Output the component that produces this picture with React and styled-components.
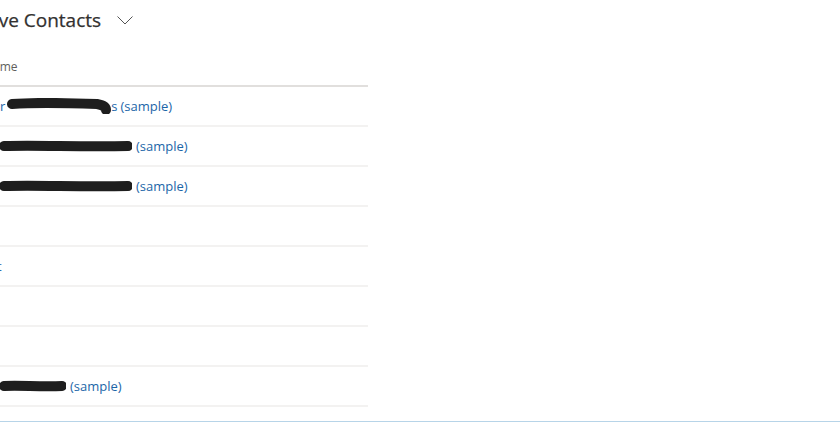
import React from 'react';
import styled, { createGlobalStyle } from 'styled-components';

const Global = createGlobalStyle`
  html, body { margin: 0; padding: 0; background: #fff; }
  body { font-family: "Open Sans", "Noto Sans", sans-serif; overflow: hidden; }
`;

const Page = styled.div`
  width: 840px;
  height: 422px;
  box-sizing: border-box;
  border-bottom: 1px solid #b7d4e8;
  overflow: hidden;
  display: flex;
  flex-direction: column;
`;

const TitleRow = styled.div`
  height: 40px;
  display: flex;
  align-items: center;
  margin-left: -34px;
  gap: 16px;
`;

const Title = styled.h1`
  margin: 0;
  font-size: 19px;
  font-weight: 400;
  color: #323130;
  line-height: 26px;
  white-space: nowrap;
  -webkit-text-stroke: 0.25px #323130;
`;

const Grid = styled.div`
  margin-left: -16px;
  width: 384px;
  display: flex;
  flex-direction: column;
`;

const HeaderRow = styled.div`
  height: 47px;
  box-sizing: border-box;
  border-bottom: 2px solid #e1dfdd;
  display: flex;
  align-items: flex-end;
  padding-bottom: 10px;
`;

const HeaderCell = styled.span`
  font-size: 12px;
  line-height: 16px;
  color: #605e5c;
`;

const Row = styled.div`
  height: 40px;
  box-sizing: border-box;
  border-bottom: 2px solid #f3f2f1;
  display: flex;
  align-items: center;
`;

const NameLink = styled.a`
  display: flex;
  align-items: center;
  margin-left: ${(p) => p.$indent || 0}px;
  font-size: 13px;
  line-height: 18px;
  color: #1c66a8;
  text-decoration: none;
  white-space: pre;
`;

const Sample = styled.span`
  margin-left: ${(p) => p.$gap ?? 4}px;
`;

function Scribble({ width, curl }) {
  const h = 16;
  const d = curl
    ? `M5 6 C ${width * 0.3} 4, ${width * 0.6} 5, ${width - 14} 6 C ${width - 8} 7, ${width - 5} 9, ${width - 5} 12`
    : `M4 8 C ${width * 0.3} 7, ${width * 0.6} 9, ${width - 4} 8`;
  return (
    <svg width={width} height={h} viewBox={`0 0 ${width} ${h}`} style={{ display: 'block' }}>
      <path d={d} stroke="#1e1e1e" strokeWidth="10" strokeLinecap="round" fill="none" />
    </svg>
  );
}

function Chevron() {
  return (
    <svg width="16" height="11" viewBox="0 0 16 11">
      <polyline points="0.5,1.5 8,9 15.5,1.5" fill="none" stroke="#555" strokeWidth="1" />
    </svg>
  );
}

const rows = [
  { indent: 16, pre: 'r', scribble: 104, curl: true, post: 's', gap: 3 },
  { indent: 16, scribble: 132 },
  { indent: 16, scribble: 132 },
  null,
  { indent: 13, pre: 't' },
  null,
  null,
  { indent: 16, scribble: 66 },
];

export default function App() {
  return (
    <>
      <Global />
      <Page>
        <TitleRow>
          <Title>Active Contacts</Title>
          <Chevron />
        </TitleRow>
        <Grid>
          <HeaderRow>
            <HeaderCell>Name</HeaderCell>
          </HeaderRow>
          {rows.map((r, i) => (
            <Row key={i}>
              {r && (
                <NameLink href="#" $indent={r.indent}>
                  {r.pre && <span>{r.pre}</span>}
                  {r.scribble && (
                    <span style={{ marginLeft: r.pre ? 2 : 0 }}>
                      <Scribble width={r.scribble} curl={r.curl} />
                    </span>
                  )}
                  {r.post && <span>{r.post}</span>}
                  {r.scribble && <Sample $gap={r.gap ?? 4}>(sample)</Sample>}
                </NameLink>
              )}
            </Row>
          ))}
        </Grid>
      </Page>
    </>
  );
}
